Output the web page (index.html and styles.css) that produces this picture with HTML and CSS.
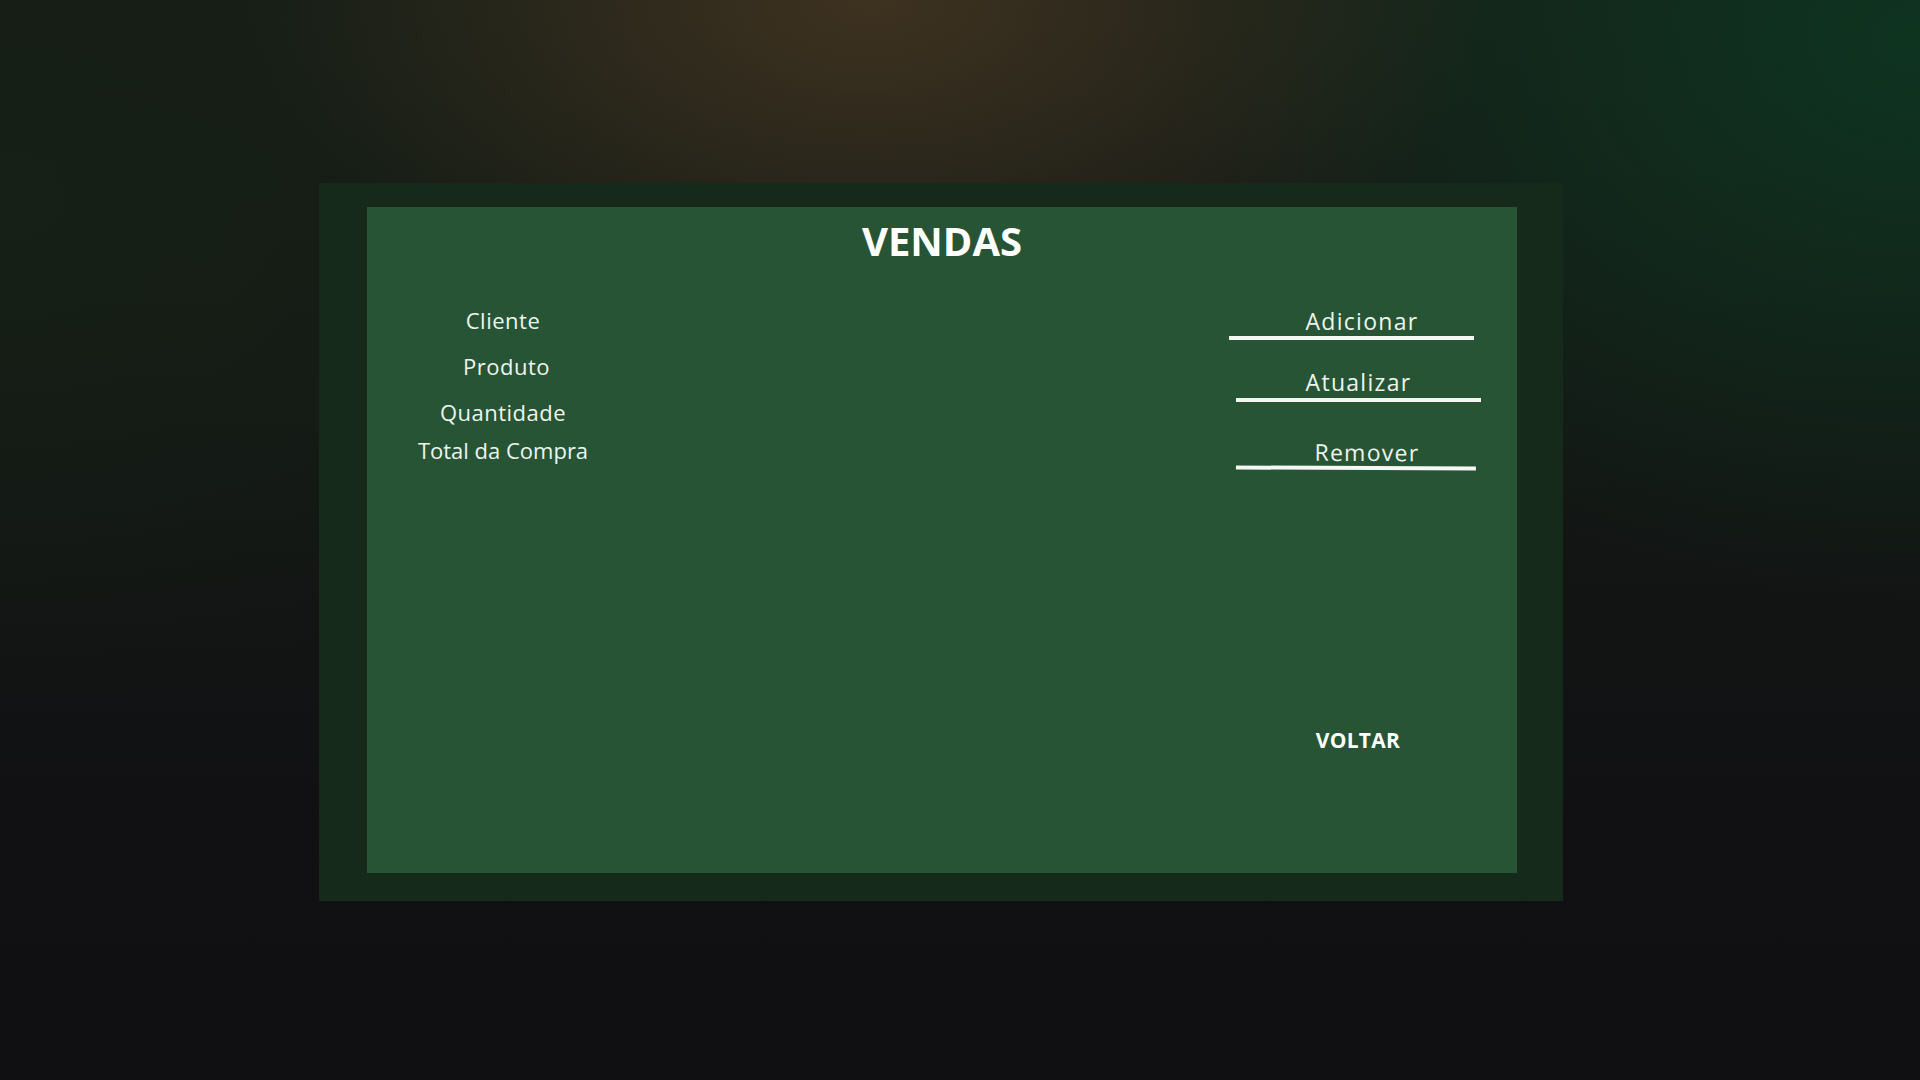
FILE: index.html
```html
<!DOCTYPE html>
<html lang="pt-BR">
<head>
<meta charset="utf-8">
<title>Vendas</title>
<link rel="stylesheet" href="styles.css">
</head>
<body>
<div class="page">
  <div class="frame">
    <div class="panel">
      <h1 class="title">VENDAS</h1>
      <div class="body">
        <div class="labels">
          <div class="label label--cliente">Cliente</div>
          <div class="label label--produto">Produto</div>
          <div class="label label--qtd">Quantidade</div>
          <div class="label label--total">Total da Compra</div>
        </div>
        <div class="actions">
          <div class="action action--add">Adicionar</div>
          <div class="action action--upd">Atualizar</div>
          <div class="action action--rem">Remover</div>
          <div class="back">VOLTAR</div>
        </div>
      </div>
    </div>
  </div>
</div>
</body>
</html>
```
FILE: styles.css
```css
html, body {
  margin: 0;
  padding: 0;
  height: 100%;
}
body {
  font-family: "Open Sans", "Noto Sans", sans-serif;
  color: #fff;
  background:
    radial-gradient(ellipse 620px 360px at 870px 0px, rgba(62, 50, 32, 1) 0%, rgba(62, 50, 32, 0) 100%),
    radial-gradient(ellipse 760px 560px at 1920px 40px, rgba(14, 52, 32, 1) 0%, rgba(14, 52, 32, 0) 100%),
    radial-gradient(ellipse 800px 500px at 0px 200px, rgba(22, 32, 22, 1) 0%, rgba(22, 32, 22, 0) 100%),
    linear-gradient(180deg, #171d17 0%, #131614 45%, #111113 75%, #101012 100%);
  overflow: hidden;
}
.page {
  padding: 183px 0 0 319px;
}
.frame {
  width: 1244px;
  height: 718px;
  box-sizing: border-box;
  background: #152a1b;
  padding: 24px 46px 28px 48px;
}
.panel {
  height: 100%;
  background: #275435;
  padding-top: 10px;
  box-sizing: border-box;
}
.title {
  margin: 0;
  font-size: 40px;
  line-height: 48px;
  font-weight: 700;
  text-align: center;
  color: #fff;
}
.body {
  display: flex;
  justify-content: space-between;
  padding: 0 36px;
}
.labels {
  width: 200px;
  display: flex;
  flex-direction: column;
  padding-top: 43px;
}
.label {
  font-size: 22px;
  line-height: 24px;
  letter-spacing: 0.5px;
  text-align: center;
  color: #eef5ee;
}
.label--produto {
  margin-top: 22px;
  padding-left: 7px;
}
.label--qtd {
  margin-top: 22px;
}
.label--total {
  margin-top: 14px;
  letter-spacing: 0;
}
.actions {
  width: 252px;
  display: flex;
  flex-direction: column;
  align-items: flex-start;
  padding-top: 43px;
}
.action {
  font-size: 23px;
  line-height: 26px;
  letter-spacing: 1.3px;
  text-align: center;
  width: 245px;
  box-sizing: border-box;
  border-bottom: 4px solid #f4f7f2;
  color: #eef5ee;
}
.action--add {
  padding: 0 0 2px 21px;
}
.action--upd {
  margin: 29px 0 0 7px;
  padding-bottom: 3px;
}
.action--rem {
  margin: 37px 0 0 7px;
  width: 240px;
  padding: 0 0 1px 22px;
  transform: rotate(0.25deg);
}
.back {
  align-self: stretch;
  margin-top: 258px;
  padding-left: 6px;
  font-size: 21px;
  line-height: 24px;
  font-weight: 700;
  letter-spacing: 0.3px;
  text-align: center;
  color: #fff;
}
```
